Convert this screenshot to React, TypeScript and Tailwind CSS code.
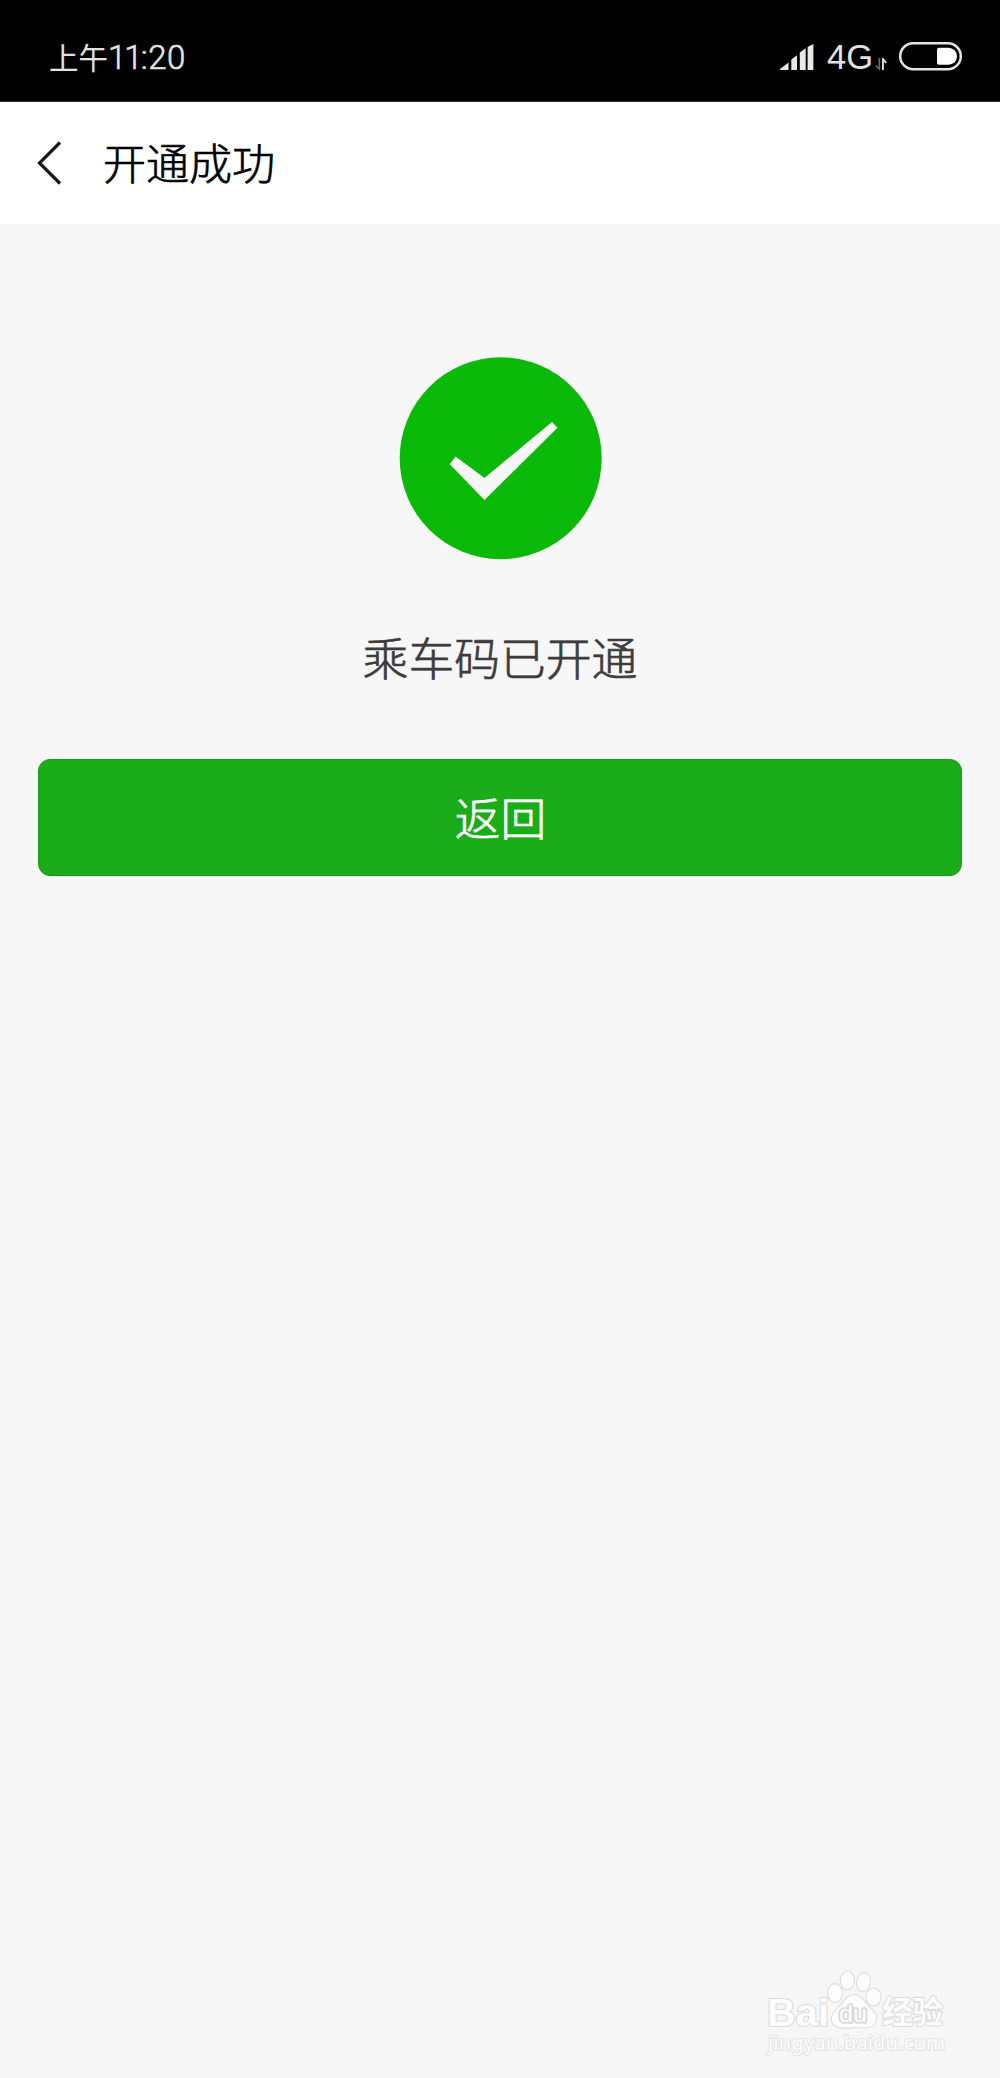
const thinCjk = "font-['Noto_Sans_CJK_SC',sans-serif] font-light";

function StatusBar() {
  return (
    <div className="flex h-[102px] items-center justify-between border-b border-[#2a2a2a] bg-black pt-[13px] pr-[37px] pl-[49px] text-[#e2e2e2]">
      <div className="flex items-center whitespace-nowrap leading-none">
        <span className="font-['Noto_Sans_CJK_SC',sans-serif] text-[29.5px]">上午</span>
        <span className="flex pt-px font-['Roboto',sans-serif] text-[33px] font-light [-webkit-text-stroke:0.6px]">
          <span className="-tracking-[2px]">11</span>
          <span className="tracking-[0.8px]">:</span>
          <span className="tracking-[0.3px]">20</span>
        </span>
      </div>
      <div className="flex items-center">
        <svg width="34" height="27" viewBox="0 0 34 27" fill="#e8e8e8">
          <path d="M0 26V25L8.5 18.5V26ZM11.3 26V15.5L17 11.3V26ZM19.8 26V8.5L25.7 4.3V26ZM27.6 26V3L33.4 0V26Z" />
        </svg>
        <span className="ml-[13px] font-['Liberation_Sans',sans-serif] text-[34.5px] leading-none">4G</span>
        <svg className="mt-[14px] ml-[2px]" width="14" height="13" viewBox="0 0 14 13" fill="none">
          <path d="M4.3 0V11L0.7 7.5" stroke="#666" strokeWidth="1.7" />
          <path d="M8 12V1L11.2 5" stroke="#ddd" strokeWidth="1.9" />
        </svg>
        <svg className="mb-[2px] ml-[10px]" width="64" height="29" viewBox="0 0 64 29">
          <rect x="1.2" y="1.2" width="60.6" height="26" rx="13" fill="none" stroke="#e4e4e4" strokeWidth="2.5" />
          <path d="M40 5.8H49.5A8.5 8.5 0 0 1 49.5 22.8H40Q38 22.8 38 20.8V7.8Q38 5.8 40 5.8Z" fill="#fff" />
        </svg>
      </div>
    </div>
  );
}

function Header() {
  return (
    <header className="flex h-[122px] items-center bg-white pl-[37px] text-black">
      <svg width="26" height="44" viewBox="0 0 26 44" fill="none">
        <path d="M23 1.500L2.500 22L23 42.500" stroke="#1a1a1a" strokeWidth="3.2" />
      </svg>
      <h1 className={"ml-[40px] pb-[3px] text-[43px] leading-none [-webkit-text-stroke:0.7px] " + thinCjk}>开通成功</h1>
    </header>
  );
}

function Watermark() {
  return (
    <svg className="absolute right-[50px] bottom-[18px]" width="190" height="92" viewBox="760 1968 190 92" fill="#fdfdfd" stroke="#dcdcdc" strokeWidth="2.2" paintOrder="stroke" strokeLinejoin="round">
      <text x="767" y="2026" fontFamily="Liberation Sans" fontWeight="700" fontSize="39" textLength="62" lengthAdjust="spacingAndGlyphs">Bai</text>
      <ellipse cx="847.5" cy="1980.500" rx="6.500" ry="9" />
      <ellipse cx="863.500" cy="1982" rx="6.500" ry="9" transform="rotate(10 863.500 1982)" />
      <ellipse cx="835" cy="1993" rx="6.800" ry="8.800" />
      <ellipse cx="873.500" cy="1997" rx="7" ry="8.500" />
      <path d="M854 1995C860 1995 864 2001 868 2006C873 2011 877 2014 876 2020C874 2028 866 2028 855 2027C844 2028 835 2029 832 2021C831 2014 836 2010 841 2005C845 2000 848 1995 854 1995Z" />
      <text x="839" y="2022" fontFamily="Liberation Sans" fontWeight="400" fontSize="24" strokeWidth="3.6" stroke="#dadada" textLength="28" lengthAdjust="spacingAndGlyphs">du</text>
      <text x="882" y="2023" fontFamily="Noto Sans CJK SC" fontWeight="700" fontSize="30.5">经验</text>
      <text x="768" y="2050" fontFamily="Noto Sans" fontSize="20" stroke="#e4e4e4" textLength="177" lengthAdjust="spacingAndGlyphs">jingyan.baidu.com</text>
    </svg>
  );
}

export default function App() {
  return (
    <div className="relative flex h-[2078px] w-full flex-col overflow-hidden bg-[#f7f7f7]">
      <StatusBar />
      <Header />
      <main className="flex flex-col items-center px-[38px] pt-[133px]">
        <svg width="203" height="203" viewBox="0 0 203 203">
          <circle cx="101.7" cy="101.3" r="101" fill="#0bba09" />
          <path d="M56.500 99.500L85.500 121L153 65L158.500 70.700L85.500 143L50.800 107.300Z" fill="#f7f7f7" />
        </svg>
        <p className={"mt-[73px] text-[45.8px] leading-[46px] text-[#3c3c3c] [-webkit-text-stroke:0.7px] " + thinCjk}>乘车码已开通</p>
        <button className={"mt-[80px] flex h-[117px] w-full items-center justify-center rounded-[12px] border border-[#1a9a19] bg-[#1bad19] pb-px pl-px text-[45.8px] leading-none text-white [-webkit-text-stroke:0.7px] " + thinCjk}>
          返回
        </button>
      </main>
      <Watermark />
    </div>
  );
}
